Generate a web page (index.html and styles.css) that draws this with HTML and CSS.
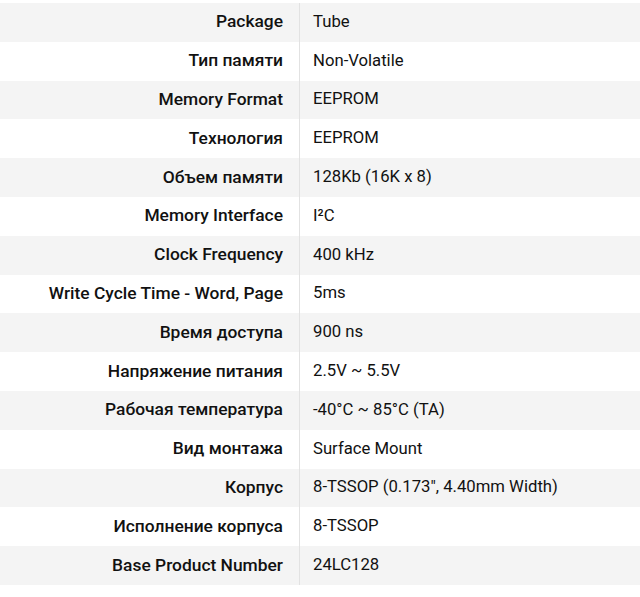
FILE: index.html
```html
<!DOCTYPE html>
<html lang="ru">
<head>
<meta charset="utf-8">
<link rel="stylesheet" href="styles.css">
</head>
<body>
<table class="specs">
<tbody>
<tr><th>Package</th><td>Tube</td></tr>
<tr><th>Тип памяти</th><td>Non-Volatile</td></tr>
<tr><th>Memory Format</th><td>EEPROM</td></tr>
<tr><th>Технология</th><td>EEPROM</td></tr>
<tr><th>Объем памяти</th><td>128Kb (16K x 8)</td></tr>
<tr><th>Memory Interface</th><td>I²C</td></tr>
<tr><th>Clock Frequency</th><td>400 kHz</td></tr>
<tr><th>Write Cycle Time - Word, Page</th><td>5ms</td></tr>
<tr><th>Время доступа</th><td>900 ns</td></tr>
<tr><th>Напряжение питания</th><td>2.5V ~ 5.5V</td></tr>
<tr><th>Рабочая температура</th><td>-40°C ~ 85°C (TA)</td></tr>
<tr><th>Вид монтажа</th><td>Surface Mount</td></tr>
<tr><th>Корпус</th><td>8-TSSOP (0.173", 4.40mm Width)</td></tr>
<tr><th>Исполнение корпуса</th><td>8-TSSOP</td></tr>
<tr><th>Base Product Number</th><td>24LC128</td></tr>
</tbody>
</table>
</body>
</html>
```
FILE: styles.css
```css
html, body {
  margin: 0;
  background: #ffffff;
}
body {
  padding-top: 3px;
  font-family: Roboto, "Noto Sans", sans-serif;
  font-size: 16.7px;
  color: #111111;
}
.specs {
  width: 640px;
  border-collapse: collapse;
  table-layout: fixed;
}
.specs tr {
  height: 38.8px;
}
.specs tr:nth-child(odd) {
  background: #f4f4f4;
}
.specs th {
  width: 283px;
  padding: 0 16px 2px 0;
  text-align: right;
  font-size: 17.4px;
  font-weight: 500;
  border-right: 1px solid #e2e2e2;
  white-space: nowrap;
}
.specs td {
  padding: 0 0 2px 13px;
  text-align: left;
  font-weight: 400;
  white-space: nowrap;
}
```
